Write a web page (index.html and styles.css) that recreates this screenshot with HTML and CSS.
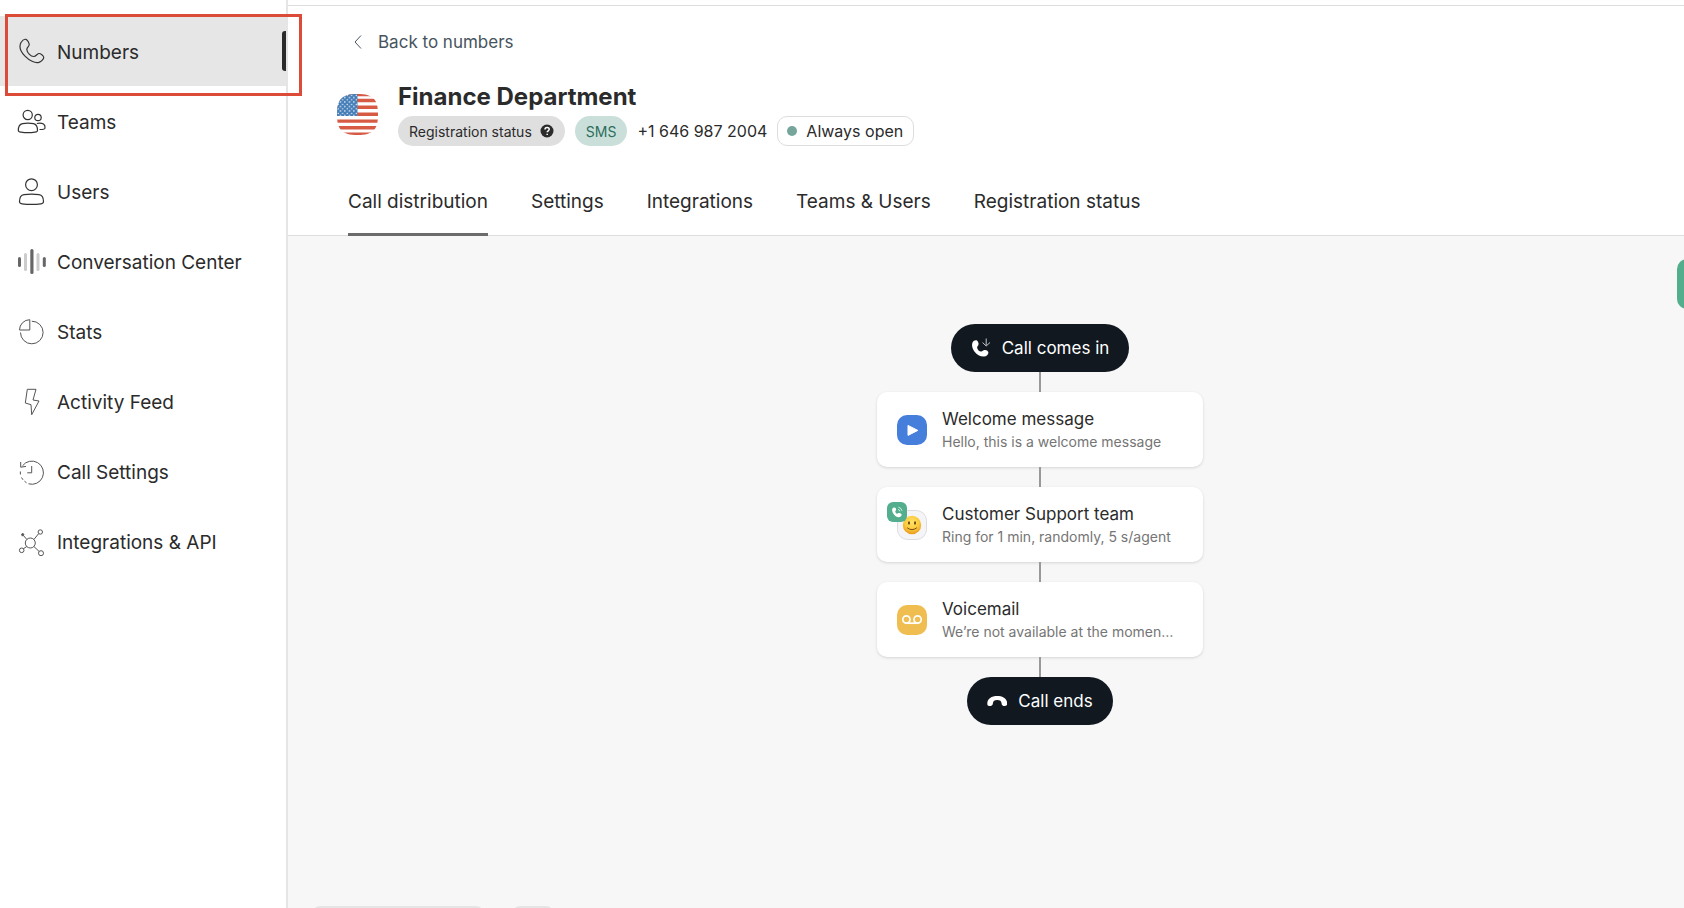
FILE: index.html
```
<!DOCTYPE html>
<html lang="en">
<head>
  <meta charset="UTF-8">
  <meta name="viewport" content="width=device-width, initial-scale=1.0">
  <title>Finance Department - Numbers</title>
  <link rel="stylesheet" href="styles.css">
</head>
<body>
  <aside class="sidebar">
    <nav class="menu">
      <a class="menu-item active" href="#">
        <svg class="icon" viewBox="0 0 30 30"><path d="M4 6.500C5.200 4.500 7.500 2.900 9 3.400C10.700 4 12.300 7.200 12.200 8.800C12.100 10.500 9.700 11.500 9.800 13.500C10 16.500 13.600 20.400 16.800 20.500C19 20.600 19.800 17.800 21.800 17.500C23.600 17.300 26.500 19.600 26.700 21.200C26.900 23 24.400 25.600 22 26.300C18 27.400 12.200 24.600 8 20.200C3.800 15.800 1.800 10.500 4 6.500Z"/></svg>
        <span>Numbers</span>
      </a>
      <a class="menu-item" href="#">
        <svg class="icon" viewBox="0 0 30 30"><circle cx="10.700" cy="9" r="4.600"/><circle cx="21" cy="11.500" r="3.200"/><path d="M5.500 17.600C9 16.900 13 16.900 16.500 17.600C19.500 18.200 20.500 21 20.500 24.500C20.500 25.700 19.500 26 18 26.200C13 26.900 8.500 26.900 4 26.200C2.300 26 1.300 25.700 1.300 24.500C1.300 21 2.500 18.200 5.500 17.600Z"/><path d="M19.800 17.500C22 17 25 17.200 26.500 18C28 19 28.200 20.500 28 22C27.800 23.400 25 23.600 22.500 23.500"/></svg>
        <span>Teams</span>
      </a>
      <a class="menu-item" href="#">
        <svg class="icon" viewBox="0 0 30 30"><circle cx="14.500" cy="8.700" r="5.900"/><path d="M7 18.600C12 17.900 17 17.900 22 18.600C25.500 19.100 26.500 22 26.500 25.500C26.500 27 25.500 27.600 24 27.800C17.500 28.700 11.500 28.700 5 27.800C3.500 27.600 2.500 27 2.500 25.500C2.500 22 3.500 19.100 7 18.600Z"/></svg>
        <span>Users</span>
      </a>
      <a class="menu-item" href="#">
        <svg class="icon bars" viewBox="0 0 30 30"><rect x="1" y="11" width="3" height="10" rx="1.500"/><rect class="light" x="7" y="7" width="3" height="18" rx="1.500"/><rect x="13.300" y="3" width="3.200" height="25" rx="1.500"/><rect class="light" x="19.500" y="7" width="3" height="18" rx="1.500"/><rect x="25.800" y="11" width="3" height="10" rx="1.500"/></svg>
        <span>Conversation Center</span>
      </a>
      <a class="menu-item" href="#">
        <svg class="icon thin" viewBox="0 0 30 30"><path d="M14.800 5.200A11.300 11.300 0 1 1 3.500 16.500"/><path d="M12.800 3.700V14H2.500A10.300 10.300 0 0 1 12.800 3.700Z"/></svg>
        <span>Stats</span>
      </a>
      <a class="menu-item" href="#">
        <svg class="icon thin" viewBox="0 0 30 30"><path d="M10.300 3.300H19L16 14L22 15L14.700 28.700L14 18.700L8.300 17Z"/></svg>
        <span>Activity Feed</span>
      </a>
      <a class="menu-item" href="#">
        <svg class="icon thin" viewBox="0 0 30 30"><path d="M5.500 9.800A11.600 11.600 0 1 1 11.500 27.800"/><path d="M3.400 15.500V18.500M4.500 21.500L6 23.800M7.500 25.200L9.500 26.800"/><path d="M3.700 6V11.200L9 10.400"/><path d="M14.700 10V16.800H10.300"/></svg>
        <span>Call Settings</span>
      </a>
      <a class="menu-item" href="#">
        <svg class="icon thin" viewBox="0 0 30 30"><circle cx="13.300" cy="17" r="5"/><circle class="dot" cx="5.700" cy="8.700" r="1.100"/><circle cx="23.300" cy="6" r="2.200"/><circle cx="4.700" cy="24.300" r="2.300"/><circle cx="24" cy="27.200" r="2.500"/><path d="M6.400 9.500L9.800 13.400M16.900 13.500L21.700 7.600M9.800 20.500L6.400 22.700M16.900 20.500L22.100 25.400"/></svg>
        <span>Integrations &amp; API</span>
      </a>
    </nav>
    <div class="highlight"></div>
  </aside>

  <main class="main">
    <header class="header">
      <a class="back" href="#">
        <svg class="chevron" viewBox="0 0 8 14"><path d="M7 0.500L1 7L7 13.500"/></svg>
        Back to numbers
      </a>

      <div class="number">
        <svg class="flag" viewBox="0 0 41 41">
          <clipPath id="flag-shape"><path d="M20.500 0C36 0 41 5 41 20.500S36 41 20.500 41S0 36 0 20.500S5 0 20.500 0Z"/></clipPath>
          <pattern id="stars" width="4.500" height="4.500" patternUnits="userSpaceOnUse"><circle cx="1.200" cy="1.300" r="0.700" fill="#fff"/><circle cx="3.400" cy="3.500" r="0.700" fill="#fff"/></pattern>
          <g clip-path="url(#flag-shape)">
            <rect width="41" height="41" fill="#fff"/>
            <path d="M0 .5H41M0 6.500H41M0 13.300H41M0 20.300H41M0 27.100H41M0 33.800H41M0 40.300H41" stroke="#d75a45" stroke-width="3.400"/>
            <rect width="20.500" height="22" fill="#467eb8"/>
            <rect width="20.500" height="22" fill="url(#stars)"/>
          </g>
        </svg>
        <div>
          <h1>Finance Department</h1>
          <div class="badges">
            <span class="badge">Registration status <svg class="help" viewBox="0 0 14 14"><circle cx="7" cy="7" r="6.500" fill="#2b2b2b"/><path d="M5 5.500C5 2.800 9.200 2.900 9.200 5.300C9.200 6.800 7.200 6.800 7.200 8.300M7.200 9.700V11" fill="none" stroke="#fff" stroke-width="1.500"/></svg></span>
            <span class="badge sms">SMS</span>
            <span class="phone">+1 646 987 2004</span>
            <span class="open">Always open</span>
          </div>
        </div>
      </div>

      <nav class="tabs">
        <a class="tab active" href="#">Call distribution</a>
        <a class="tab" href="#">Settings</a>
        <a class="tab" href="#">Integrations</a>
        <a class="tab" href="#">Teams &amp; Users</a>
        <a class="tab" href="#">Registration status</a>
      </nav>
    </header>

    <section class="canvas">
      <div class="flow">
        <div class="pill">
          <svg viewBox="0 0 20 20"><path d="M1.500 4.500C2.500 2.600 5 1.800 6.200 2.800C7.400 3.800 8 6 7.300 7.200C6.600 8.200 5.900 8.600 6.200 9.900C6.600 11.700 8.200 13.300 10 13.500C11.500 13.700 12 12.200 13.500 12C15.500 11.700 17.400 13.200 17.400 14.500C17.400 16.600 15.500 18.500 13 18.600C9.500 18.800 5.700 16.800 3.200 13.300C1.200 10.600 .5 6.800 1.500 4.500Z" fill="#fff"/><path d="M15.200 .5V7.500M11.500 4.500L15.200 8L19 4.500" fill="none" stroke="#c4c7c9"/></svg>
          Call comes in
        </div>
        <div class="line"></div>
        <div class="card">
          <svg class="card-icon" viewBox="0 0 30 30"><rect width="30" height="30" rx="10" fill="#467edc"/><path d="M11 10.400V20.400L20.800 15.400Z" fill="#fff" stroke="#fff" stroke-linejoin="round"/></svg>
          <div class="card-text">
            <h2>Welcome message</h2>
            <p>Hello, this is a welcome message</p>
          </div>
        </div>
        <div class="line"></div>
        <div class="card">
          <div class="team-icon">
            <svg class="card-icon" viewBox="0 0 30 30">
              <defs><radialGradient id="face" cx=".5" cy=".35" r=".65"><stop offset="0" stop-color="#ffe46a"/><stop offset=".6" stop-color="#fbc93c"/><stop offset="1" stop-color="#e99a1c"/></radialGradient></defs>
              <rect x=".5" y=".5" width="29" height="29" rx="10" fill="#f5f5f7" stroke="#dcdce0"/>
              <circle cx="15" cy="15" r="9.200" fill="url(#face)"/>
              <ellipse cx="12" cy="13" rx="1" ry="1.700" fill="#6b4314"/><ellipse cx="18" cy="13" rx="1" ry="1.700" fill="#6b4314"/>
              <path d="M10.500 18Q15 21.500 19.500 18" fill="none" stroke="#7c4d15" stroke-linecap="round"/>
            </svg>
            <svg class="ring" viewBox="0 0 20 20"><rect width="20" height="20" rx="6" fill="#52ae8c"/><path d="M5.400 6.500C6 5.300 7.800 5 8.600 5.900C9.300 6.800 9.300 8 8.600 8.700C8 9.400 8.200 10.600 9.400 11.400C10.500 12.100 11 11 12.200 11C13.600 11 14.800 12 14.700 13C14.600 14.300 13 15.300 11.500 15.200C7.900 14.900 4.100 9.600 5.400 6.500Z" fill="#fff"/><path d="M11 7.400Q12.600 7.800 12.900 9.300M11.400 5.200Q14.400 5.800 15 8.800" fill="none" stroke="#d5efe5"/></svg>
          </div>
          <div class="card-text">
            <h2>Customer Support team</h2>
            <p>Ring for 1 min, randomly, 5 s/agent</p>
          </div>
        </div>
        <div class="line"></div>
        <div class="card">
          <svg class="card-icon" viewBox="0 0 30 30"><rect width="30" height="30" rx="10" fill="#efbd50"/><g fill="none" stroke="#fff" stroke-width="1.700"><circle cx="9.400" cy="14.500" r="3.600"/><circle cx="20.600" cy="14.500" r="3.600"/><path d="M9.400 18.200H20.600"/></g></svg>
          <div class="card-text">
            <h2>Voicemail</h2>
            <p>We’re not available at the momen…</p>
          </div>
        </div>
        <div class="line"></div>
        <div class="pill">
          <svg viewBox="0 0 20 20"><path d="M.3 12.500C.3 7.500 4.700 5 10.200 5S20.200 7.500 20.200 12.500C20.200 14.300 19.500 15 18 15C16 15 14.700 14.400 14.600 12.500C14.500 10 13 9 10.200 9S6 10 5.900 12.500C5.700 14.400 4.300 15 2.300 15C.9 15 .3 14.300 .3 12.500Z" fill="#fff"/></svg>
          Call ends
        </div>
      </div>
      <button class="publish" type="button" aria-label="Publish"></button>
      <div class="toolbar">
        <div class="tool zoom"></div>
        <div class="tool fit"></div>
      </div>
    </section>
  </main>
</body>
</html>
```
FILE: styles.css
```
* { margin: 0; padding: 0; box-sizing: border-box; }
body { display: flex; min-height: 100vh; overflow-x: hidden; background: #fff; color: #2b2b2b; font-family: Inter, "Liberation Sans", sans-serif; }
a { color: inherit; text-decoration: none; }

/* sidebar */
.sidebar { position: relative; flex: 0 0 288px; border-right: 2px solid #e5e5e5; padding-top: 16px; }
.menu-item { display: flex; align-items: center; gap: 10px; height: 70px; padding-left: 17px; font-size: 19px; position: relative; }
.menu-item span { padding-top: 2px; }
.menu-item.active { background: #e6e6e6; }
.menu-item.active::after { content: ""; position: absolute; right: 0; top: 15px; width: 4px; height: 40px; background: #2b2b2b; border-radius: 3px 0 0 3px; }
.icon { width: 30px; height: 30px; fill: none; stroke: #333; stroke-width: 1.2; }
.icon.thin { stroke: #555; stroke-width: 1; }
.icon .dot { fill: #555; }
.bars { fill: #666; stroke: none; }
.bars .light { fill: #ccc; }
.highlight { position: absolute; z-index: 2; left: 5px; right: -16px; top: 14px; height: 82px; border: 3px solid #dc4b37; pointer-events: none; }

/* header */
.main { flex: 1; min-width: 0; display: flex; flex-direction: column; padding-top: 5px; }
.header { border-top: 1px solid #ddd; border-bottom: 1px solid #ddd; padding: 24px 60px 0; }
.back { display: inline-flex; align-items: center; gap: 16px; margin-left: 6px; font-size: 17px; line-height: 24px; color: #47545e; }
.chevron { width: 8px; height: 14px; fill: none; stroke: #47545e; }
.number { display: flex; align-items: center; gap: 20px; margin: 28px 0 0 -11px; }
.flag { width: 41px; height: 41px; }
h1 { font-size: 24px; line-height: 30px; margin-bottom: 4px; }
.badges { display: flex; align-items: center; gap: 10px; }
.badge { display: flex; align-items: center; gap: 8px; height: 30px; padding: 0 11px; border-radius: 15px; background: #dfdfdf; font-size: 14px; }
.badge.sms { background: #cadfd9; color: #2d6e5d; }
.help { width: 14px; height: 14px; }
.phone { font-size: 16px; }
.open { display: flex; align-items: center; height: 30px; padding: 0 10px 0 9px; border: 1px solid #ddd; border-radius: 10px; font-size: 16px; }
.open::before { content: ""; width: 10px; height: 10px; margin-right: 9px; border-radius: 50%; background: #76a69b; }
.tabs { display: flex; gap: 43px; margin-top: 20px; }
.tab { padding: 24px 0 19px; margin-bottom: -1px; border-bottom: 3px solid transparent; font-size: 19px; line-height: 24px; }
.tab.active { border-color: #6b6b6b; }

/* call flow */
.canvas { position: relative; flex: 1; overflow: hidden; background: #f7f7f7; padding: 88px 0 88px 108px; }
.flow { display: flex; flex-direction: column; align-items: center; }
.pill { display: flex; align-items: center; gap: 11px; height: 48px; padding: 0 20px; border-radius: 24px; background: #111820; color: #fff; font-size: 17px; }
.pill svg { width: 20px; height: 20px; }
.line { width: 2px; height: 20px; background: #999; }
.card { display: flex; align-items: center; gap: 15px; width: 326px; height: 75px; padding: 0 20px; border-radius: 10px; background: #fff; box-shadow: 0 1px 3px rgba(0,0,0,0.14); }
.card-icon { display: block; flex: none; width: 30px; height: 30px; }
.team-icon { position: relative; flex: none; }
.ring { position: absolute; left: -10px; top: -8px; width: 20px; height: 20px; }
.card-text { white-space: nowrap; }
.card h2 { font-size: 17px; font-weight: 400; line-height: 24px; }
.card p { font-size: 14px; line-height: 22px; color: #757575; }
.publish { position: absolute; right: -103px; top: 23px; width: 110px; height: 50px; border: 0; border-radius: 10px; background: #52ae8c; }
.toolbar { position: absolute; left: 24px; bottom: -38px; display: flex; gap: 28px; }
.tool { height: 40px; border: 2px solid #e5e5e5; border-radius: 8px; background: #fff; }
.zoom { width: 172px; }
.fit { width: 42px; }
```
